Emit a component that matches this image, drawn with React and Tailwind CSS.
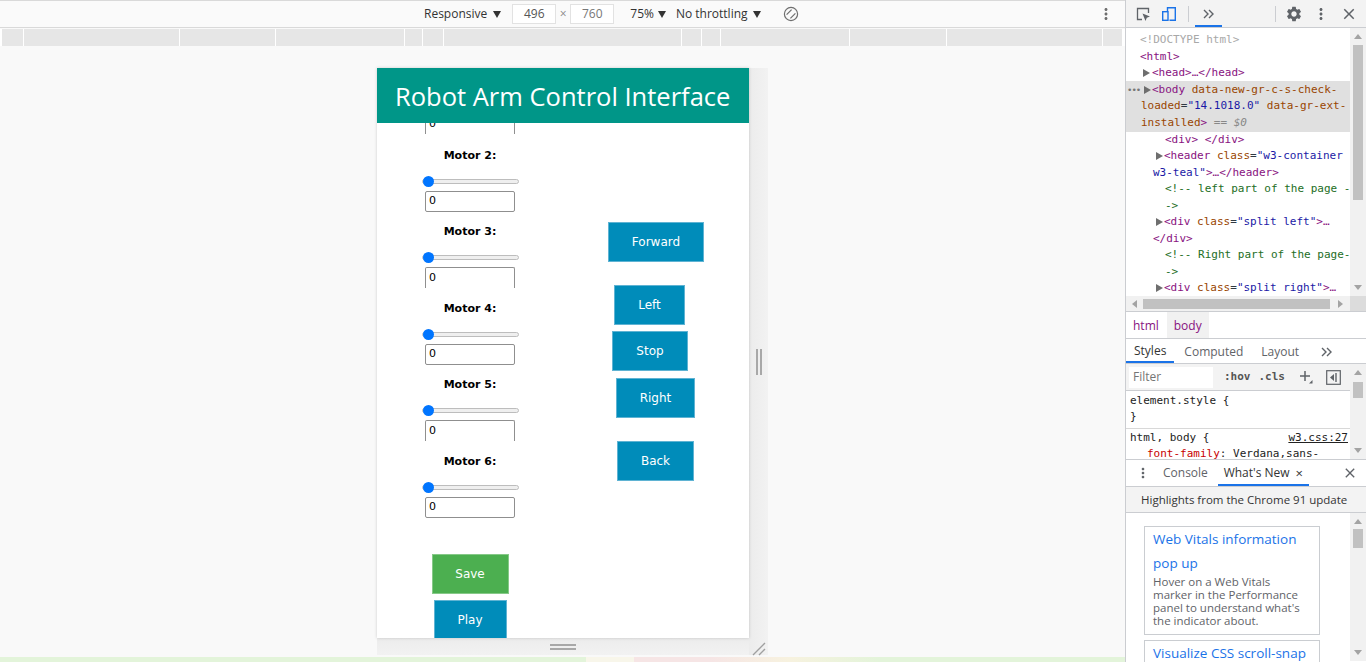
import React from 'react';
import { MdSettings, MdMoreVert, MdClose } from 'react-icons/md';

const UI = "font-['Open_Sans','Noto_Sans',sans-serif]";
const MONO = "font-['DejaVu_Sans_Mono',monospace]";
const VERD = "font-['DejaVu_Sans',sans-serif]";

function Caret({ className = '' }) {
  return (
    <svg className={className} width="8" height="7" viewBox="0 0 8 7">
      <path d="M0 0 L8 0 L4 7 Z" fill="#333" />
    </svg>
  );
}

function RotateIcon({ className = '' }) {
  return (
    <svg className={className} width="16" height="16" viewBox="0 0 16 16" fill="none" stroke="#6e6e6e" strokeWidth="1.2">
      <circle cx="8" cy="8" r="6.6" />
      <path d="M3.6 8.6 L8.6 3.6 M7.4 12.4 L12.4 7.4" />
    </svg>
  );
}

function Tri() {
  return (
    <svg width="7" height="8" viewBox="0 0 7 8" className="inline-block">
      <path d="M0 0 L7 4 L0 8 Z" fill="#6e6e6e" />
    </svg>
  );
}

function Arrow({ dir }) {
  const d = {
    up: 'M0 5 L4 0 L8 5 Z',
    down: 'M0 0 L8 0 L4 5 Z',
    left: 'M5 0 L5 8 L0 4 Z',
    right: 'M0 0 L5 4 L0 8 Z',
  }[dir];
  const w = dir === 'up' || dir === 'down' ? 8 : 5;
  const h = dir === 'up' || dir === 'down' ? 5 : 8;
  return (
    <svg width={w} height={h} viewBox={`0 0 ${w} ${h}`}>
      <path d={d} fill="#a3a3a3" />
    </svg>
  );
}

function VScroll({ height, thumbTop, thumbH }) {
  return (
    <div className="w-[16px] shrink-0 bg-[#f1f1f1] flex flex-col items-center" style={{ height }}>
      <div className="h-[17px] w-full flex items-center justify-center shrink-0">
        <Arrow dir="up" />
      </div>
      <div className="w-[10px] bg-[#c1c1c1] shrink-0" style={{ marginTop: thumbTop - 17, height: thumbH }} />
      <div className="mt-auto h-[17px] w-full flex items-center justify-center shrink-0">
        <Arrow dir="down" />
      </div>
    </div>
  );
}

function Slider() {
  return (
    <div className="mt-[12px] w-[97px] h-[12px] shrink-0 relative flex items-center">
      <div className="w-full h-[5px] rounded-full bg-[#efefef] border border-[#bdbdbd]" />
      <div className="absolute left-[1px] top-[0.5px] w-[11px] h-[11px] rounded-full bg-[#0075ff]" />
    </div>
  );
}

function NumBox({ noBottom, className = '' }) {
  return (
    <div
      className={`${className} w-[90px] h-[21px] shrink-0 rounded-[2px] border border-[#8f8f8f] ${noBottom ? 'border-b-0 rounded-b-none' : ''} bg-white flex items-center pl-[3px] text-[11px] text-black`}
    >
      0
    </div>
  );
}

function Motor({ n, gap, noBottom }) {
  return (
    <>
      <div className={`${gap} h-[14px] shrink-0 leading-[14px] text-[11px] font-bold text-black`}>Motor {n}:</div>
      <Slider />
      <NumBox noBottom={noBottom} className="mt-[4px]" />
    </>
  );
}

function Btn({ children, className = '', green }) {
  return (
    <div
      className={`${className} h-[40px] shrink-0 flex items-center justify-center text-white text-[12px] border ${
        green ? 'bg-[#4caf50] border-[#86c988]' : 'bg-[#008cba] border-[#5fb3d3]'
      }`}
    >
      {children}
    </div>
  );
}

function Device() {
  return (
    <div className="w-[372px] h-[570px] bg-white shadow-[0_0_3px_rgba(0,0,0,0.18)] flex flex-col overflow-hidden relative z-10">
      <div className={`h-[55px] shrink-0 bg-[#009688] text-white text-[25.5px] leading-none pl-[18px] pt-[2px] flex items-center ${UI}`}>
        Robot Arm Control Interface
      </div>
      <div className={`flex-1 overflow-hidden flex ${VERD}`}>
        <div className="w-1/2 flex flex-col items-center">
          <NumBox noBottom className="-mt-[10px]" />
          <Motor n={2} gap="mt-[15px]" />
          <Motor n={3} gap="mt-[13px]" noBottom />
          <Motor n={4} gap="mt-[14px]" />
          <Motor n={5} gap="mt-[13px]" noBottom />
          <Motor n={6} gap="mt-[14px]" />
          <Btn green className="mt-[36px] w-[77px]">Save</Btn>
          <Btn className="mt-[6px] w-[73px]">Play</Btn>
        </div>
        <div className="w-1/2 flex flex-col items-start pt-[99px]">
          <Btn className="ml-[45px] w-[96px]">Forward</Btn>
          <Btn className="mt-[23px] ml-[51px] w-[71px]">Left</Btn>
          <Btn className="mt-[6px] ml-[49px] w-[76px]">Stop</Btn>
          <Btn className="mt-[7px] ml-[53px] w-[79px]">Right</Btn>
          <Btn className="mt-[23px] ml-[54px] w-[77px]">Back</Btn>
        </div>
      </div>
    </div>
  );
}

const RULER = [2, 24, 180, 276, 405, 423, 444, 682, 702, 721, 850, 947, 1103, 1123];

function Emulator() {
  return (
    <div className={`w-[1125px] h-full shrink-0 flex flex-col bg-[#f9f9f9] ${UI}`}>
      <div className="h-[28px] shrink-0 border-t border-b border-[#d9d9d9] bg-[#fafafa] flex items-center pl-[424px] text-[12px] text-[#333]">
        <span>Responsive</span>
        <Caret className="ml-[6px]" />
        <div className="ml-[11px] w-[44px] h-[20px] border border-[#e2e2e2] bg-white flex items-center justify-center text-[#555]">496</div>
        <span className="w-[14px] text-center text-[#888]">×</span>
        <div className="w-[44px] h-[20px] border border-[#e2e2e2] bg-white flex items-center justify-center text-[#777]">760</div>
        <span className="ml-[16px]">75%</span>
        <Caret className="ml-[4px]" />
        <span className="ml-[10px]">No throttling</span>
        <Caret className="ml-[5px]" />
        <RotateIcon className="ml-[22px]" />
        <div className="flex-1" />
        <MdMoreVert className="mr-[10px] text-[#6e6e6e]" size={18} />
      </div>
      <div className="h-[17px] mt-[1px] shrink-0 bg-white flex">
        <div className="w-[2px]" />
        {RULER.slice(0, -1).map((b, i) => (
          <div key={i} className="h-full bg-[#e6e6e6] mr-[1px]" style={{ width: RULER[i + 1] - b - 1 }} />
        ))}
      </div>
      <div className="flex-1 relative">
        <div className="ml-[377px] mt-[22px] w-[372px] h-[570px] relative">
          <Device />
          <div className="absolute left-[372px] top-0 w-[19px] h-[587px] bg-[linear-gradient(90deg,#ececec,#f2f2f2)] flex items-center justify-center">
            <div className="flex gap-[2px]">
              <div className="w-[2px] h-[26px] bg-[#a8a8a8]" />
              <div className="w-[2px] h-[26px] bg-[#a8a8a8]" />
            </div>
          </div>
          <div className="absolute left-0 top-[570px] w-[372px] h-[17px] bg-[linear-gradient(180deg,#ececec,#f2f2f2)] flex items-center justify-center">
            <div className="flex flex-col gap-[2px]">
              <div className="w-[26px] h-[2px] bg-[#a8a8a8]" />
              <div className="w-[26px] h-[2px] bg-[#a8a8a8]" />
            </div>
          </div>
          <svg className="absolute left-[375px] top-[574px]" width="14" height="14" viewBox="0 0 14 14">
            <path d="M1 13 L13 1 M7 13 L13 7" stroke="#a0a0a0" strokeWidth="1.4" />
          </svg>
        </div>
      </div>
      <div className="h-[5px] shrink-0 bg-[linear-gradient(90deg,#e3f4da_0px,#e3f4da_586px,#f8f6ea_586px,#f8f6ea_634px,#f6e5e5_634px,#f6e5e5_710px,#f7f2df_790px,#e3f4da_880px,#e3f4da_1125px)]" />
    </div>
  );
}

const TAG = 'text-[#881280]';
const ATTR = 'text-[#994500]';
const VAL = 'text-[#1a1aa6]';
const COM = 'text-[#236e25]';

function L({ className = '', children }) {
  return <div className={`h-[16.5px] leading-[16.5px] whitespace-nowrap flex items-center ${className}`}>{children}</div>;
}

function Tree() {
  return (
    <div className={`flex-1 overflow-hidden pt-[4px] text-[11px] ${MONO} text-[#303942]`}>
      <L className="pl-[14px]"><span className="text-[#a8a8a8]">&lt;!DOCTYPE html&gt;</span></L>
      <L className="pl-[14px]"><span className={TAG}>&lt;html&gt;</span></L>
      <L className="pl-[17px]"><Tri /><span className={`ml-[2px] ${TAG}`}>&lt;head&gt;…&lt;/head&gt;</span></L>
      <div className="bg-[#e0e0e0] -mt-[0.5px] pt-[0.5px] pb-[0.5px]">
        <L className="pl-[1px]">
          <span className="w-[17px] text-[#777] text-[9px] tracking-[-1px]">•••</span>
          <Tri />
          <span className={`ml-[1px] ${TAG}`}>&lt;body</span>
          <span className={ATTR}>&nbsp;data-new-gr-c-s-check-</span>
        </L>
        <L className="pl-[15px]">
          <span className={ATTR}>loaded</span>=<span className={VAL}>"14.1018.0"</span>
          <span className={ATTR}>&nbsp;data-gr-ext-</span>
        </L>
        <L className="pl-[15px]">
          <span className={ATTR}>installed</span><span className={TAG}>&gt;</span>
          <span className="text-[#888]">&nbsp;==&nbsp;<i>$0</i></span>
        </L>
      </div>
      <L className="pl-[39px]"><span className={TAG}>&lt;div&gt; &lt;/div&gt;</span></L>
      <L className="pl-[30px]">
        <Tri />
        <span className={`ml-[1px] ${TAG}`}>&lt;header</span>
        <span className={ATTR}>&nbsp;class</span>=<span className={VAL}>"w3-container</span>
      </L>
      <L className="pl-[27px]"><span className={VAL}>w3-teal"</span><span className={TAG}>&gt;…&lt;/header&gt;</span></L>
      <L className="pl-[39px]"><span className={COM}>&lt;!-- left part of the page -</span></L>
      <L className="pl-[39px]"><span className={COM}>-&gt;</span></L>
      <L className="pl-[30px]">
        <Tri />
        <span className={`ml-[1px] ${TAG}`}>&lt;div</span>
        <span className={ATTR}>&nbsp;class</span>=<span className={VAL}>"split left"</span>
        <span className={TAG}>&gt;…</span>
      </L>
      <L className="pl-[27px]"><span className={TAG}>&lt;/div&gt;</span></L>
      <L className="pl-[39px]"><span className={COM}>&lt;!-- Right part of the page-</span></L>
      <L className="pl-[39px]"><span className={COM}>-&gt;</span></L>
      <L className="pl-[30px]">
        <Tri />
        <span className={`ml-[1px] ${TAG}`}>&lt;div</span>
        <span className={ATTR}>&nbsp;class</span>=<span className={VAL}>"split right"</span>
        <span className={TAG}>&gt;…</span>
      </L>
    </div>
  );
}

function InspectIcon() {
  return (
    <svg width="16" height="16" viewBox="0 0 16 16" fill="none">
      <path d="M7 13.5 H2.5 V2.5 H13.5 V7" stroke="#5f6368" strokeWidth="1.3" />
      <path d="M7.5 7.5 L15 10.5 L11.8 11.8 L10.5 15 Z" fill="#5f6368" />
    </svg>
  );
}

function DeviceIcon() {
  return (
    <svg width="16" height="16" viewBox="0 0 16 16" fill="none" stroke="#1a73e8" strokeWidth="1.4">
      <path d="M6.5 5 V1.7 H14.3 V14.3 H8.5" />
      <rect x="1.7" y="5.7" width="5.3" height="8.6" />
    </svg>
  );
}

function Chevrons({ color = '#5f6368' }) {
  return (
    <svg width="11" height="10" viewBox="0 0 11 10" fill="none" stroke={color} strokeWidth="1.4">
      <path d="M1 1 L5 5 L1 9 M6 1 L10 5 L6 9" />
    </svg>
  );
}

function DevTools() {
  return (
    <div className={`w-[241px] h-full shrink-0 border-l border-[#cbcdd1] bg-white flex flex-col text-[12px] text-[#333] ${UI}`}>
      <div className="h-[28px] shrink-0 border-b border-[#cbcdd1] bg-[#f3f3f3] flex items-center pl-[9px]">
        <InspectIcon />
        <div className="ml-[10px]"><DeviceIcon /></div>
        <div className="ml-[11px] w-[1px] h-[16px] bg-[#cbcdd1]" />
        <div className="ml-[6px] w-[27px] h-full flex items-center justify-center border-b-2 border-[#1a73e8] pt-[2px]">
          <Chevrons />
        </div>
        <div className="ml-[53px] w-[1px] h-[16px] bg-[#cbcdd1]" />
        <MdSettings className="ml-[9px] text-[#5f6368]" size={18} />
        <MdMoreVert className="ml-[9px] text-[#5f6368]" size={18} />
        <MdClose className="ml-[10px] text-[#5f6368]" size={18} />
      </div>
      <div className="h-[268px] shrink-0 flex">
        <Tree />
        <VScroll height={268} thumbTop={17} thumbH={155} />
      </div>
      <div className="h-[15px] shrink-0 flex bg-[#f1f1f1]">
        <div className="w-[17px] flex items-center justify-center"><Arrow dir="left" /></div>
        <div className="w-[188px] h-[10px] mt-[3px] bg-[#c1c1c1]" />
        <div className="w-[20px] flex items-center justify-center"><Arrow dir="right" /></div>
        <div className="w-[16px] bg-[#dcdcdc]" />
      </div>
      <div className="h-[27px] shrink-0 border-t border-[#cbcdd1] flex items-stretch text-[#881280] text-[12px]">
        <div className="pl-[7px] pr-[8px] flex items-center pt-[1px]">html</div>
        <div className="px-[7px] bg-[#f1f1f1] flex items-center pt-[1px]">body</div>
      </div>
      <div className="h-[26px] shrink-0 border-t border-b border-[#cbcdd1] flex items-stretch text-[12px] text-[#5f6368]">
        <div className="px-[8px] flex items-center border-b-2 border-[#1a73e8] text-[#333] pt-[2px]">Styles</div>
        <div className="ml-[2px] px-[8px] flex items-center pt-[2px]">Computed</div>
        <div className="ml-[2px] px-[8px] flex items-center pt-[2px]">Layout</div>
        <div className="ml-[14px] flex items-center pt-[2px]"><Chevrons /></div>
      </div>
      <div className="h-[95px] shrink-0 flex overflow-hidden">
        <div className="flex-1 overflow-hidden">
          <div className="h-[27px] bg-[#f3f3f3] border-b border-[#cbcdd1] flex items-center">
            <div className="ml-[3px] w-[84px] h-[21px] bg-white flex items-center pl-[4px] text-[#757575]">Filter</div>
            <span className={`ml-[11px] text-[11px] font-bold text-[#555] ${MONO}`}>:hov</span>
            <span className={`ml-[8px] text-[11px] font-bold text-[#555] ${MONO}`}>.cls</span>
            <svg className="ml-[14px]" width="14" height="14" viewBox="0 0 14 14">
              <path d="M6 1 V11 M1 6 H11" stroke="#5f6368" strokeWidth="1.5" />
              <path d="M10 13.5 L13.5 13.5 L13.5 10 Z" fill="#5f6368" />
            </svg>
            <svg className="ml-[13px]" width="15" height="15" viewBox="0 0 15 15" fill="none">
              <rect x="0.7" y="0.7" width="13.6" height="13.6" stroke="#5f6368" strokeWidth="1.2" />
              <path d="M10 3 V12" stroke="#5f6368" strokeWidth="1.4" />
              <path d="M8 4 L4 7.5 L8 11 Z" fill="#5f6368" />
            </svg>
          </div>
          <div className={`text-[11px] ${MONO} text-[#222]`}>
            <div className="pl-[4px] pt-[2px] pb-[3px] border-b border-[#d8d8d8]">
              <div className="h-[16px] leading-[16px]">element.style {'{'}</div>
              <div className="h-[16px] leading-[16px]">{'}'}</div>
            </div>
            <div className="pl-[4px] pt-[1px]">
              <div className="h-[16px] leading-[16px] flex">
                <span>html, body {'{'}</span>
                <span className="ml-auto mr-[2px] underline">w3.css:27</span>
              </div>
              <div className="h-[16px] leading-[16px] pl-[17px] whitespace-nowrap">
                <span className="text-[#c80000]">font-family</span>: Verdana,sans-
              </div>
            </div>
          </div>
        </div>
        <VScroll height={95} thumbTop={18} thumbH={16} />
      </div>
      <div className="h-[27px] shrink-0 border-t border-[#cbcdd1] flex items-stretch text-[12px] text-[#5f6368]">
        <MdMoreVert className="ml-[9px] self-center" size={16} />
        <div className="ml-[12px] flex items-center">Console</div>
        <div className="ml-[10px] w-[91px] flex items-center justify-center border-b-2 border-[#1a73e8] text-[#333] pt-[2px]">
          What's New <span className="ml-[6px] text-[13px] leading-none">×</span>
        </div>
        <MdClose className="ml-auto mr-[8px] self-center" size={16} />
      </div>
      <div className="h-[27px] shrink-0 bg-[#f3f3f3] border-t border-b border-[#cbcdd1] flex items-center pl-[15px] text-[11.5px] text-[#333]">
        Highlights from the Chrome 91 update
      </div>
      <div className="flex-1 flex overflow-hidden">
        <div className="flex-1 overflow-hidden pl-[18px] pt-[13px]">
          <div className="w-[176px] border border-[#cacdd1] pl-[8px] pb-[7px]">
            <div className="text-[13.5px] leading-[24px] text-[#1a73e8]">Web Vitals information<br />pop up</div>
            <div className="text-[11.5px] leading-[13px] text-[#5f6368]">
              Hover on a Web Vitals<br />marker in the Performance<br />panel to understand what's<br />the indicator about.
            </div>
          </div>
          <div className="mt-[5px] w-[176px] h-[40px] border border-[#cacdd1] pl-[8px]">
            <div className="text-[13.5px] leading-[24px] text-[#1a73e8] whitespace-nowrap">Visualize CSS scroll-snap</div>
          </div>
        </div>
        <VScroll height={148} thumbTop={16} thumbH={19} />
      </div>
    </div>
  );
}

export default function App() {
  return (
    <div className="w-[1366px] h-[662px] flex overflow-hidden bg-white">
      <Emulator />
      <DevTools />
    </div>
  );
}
